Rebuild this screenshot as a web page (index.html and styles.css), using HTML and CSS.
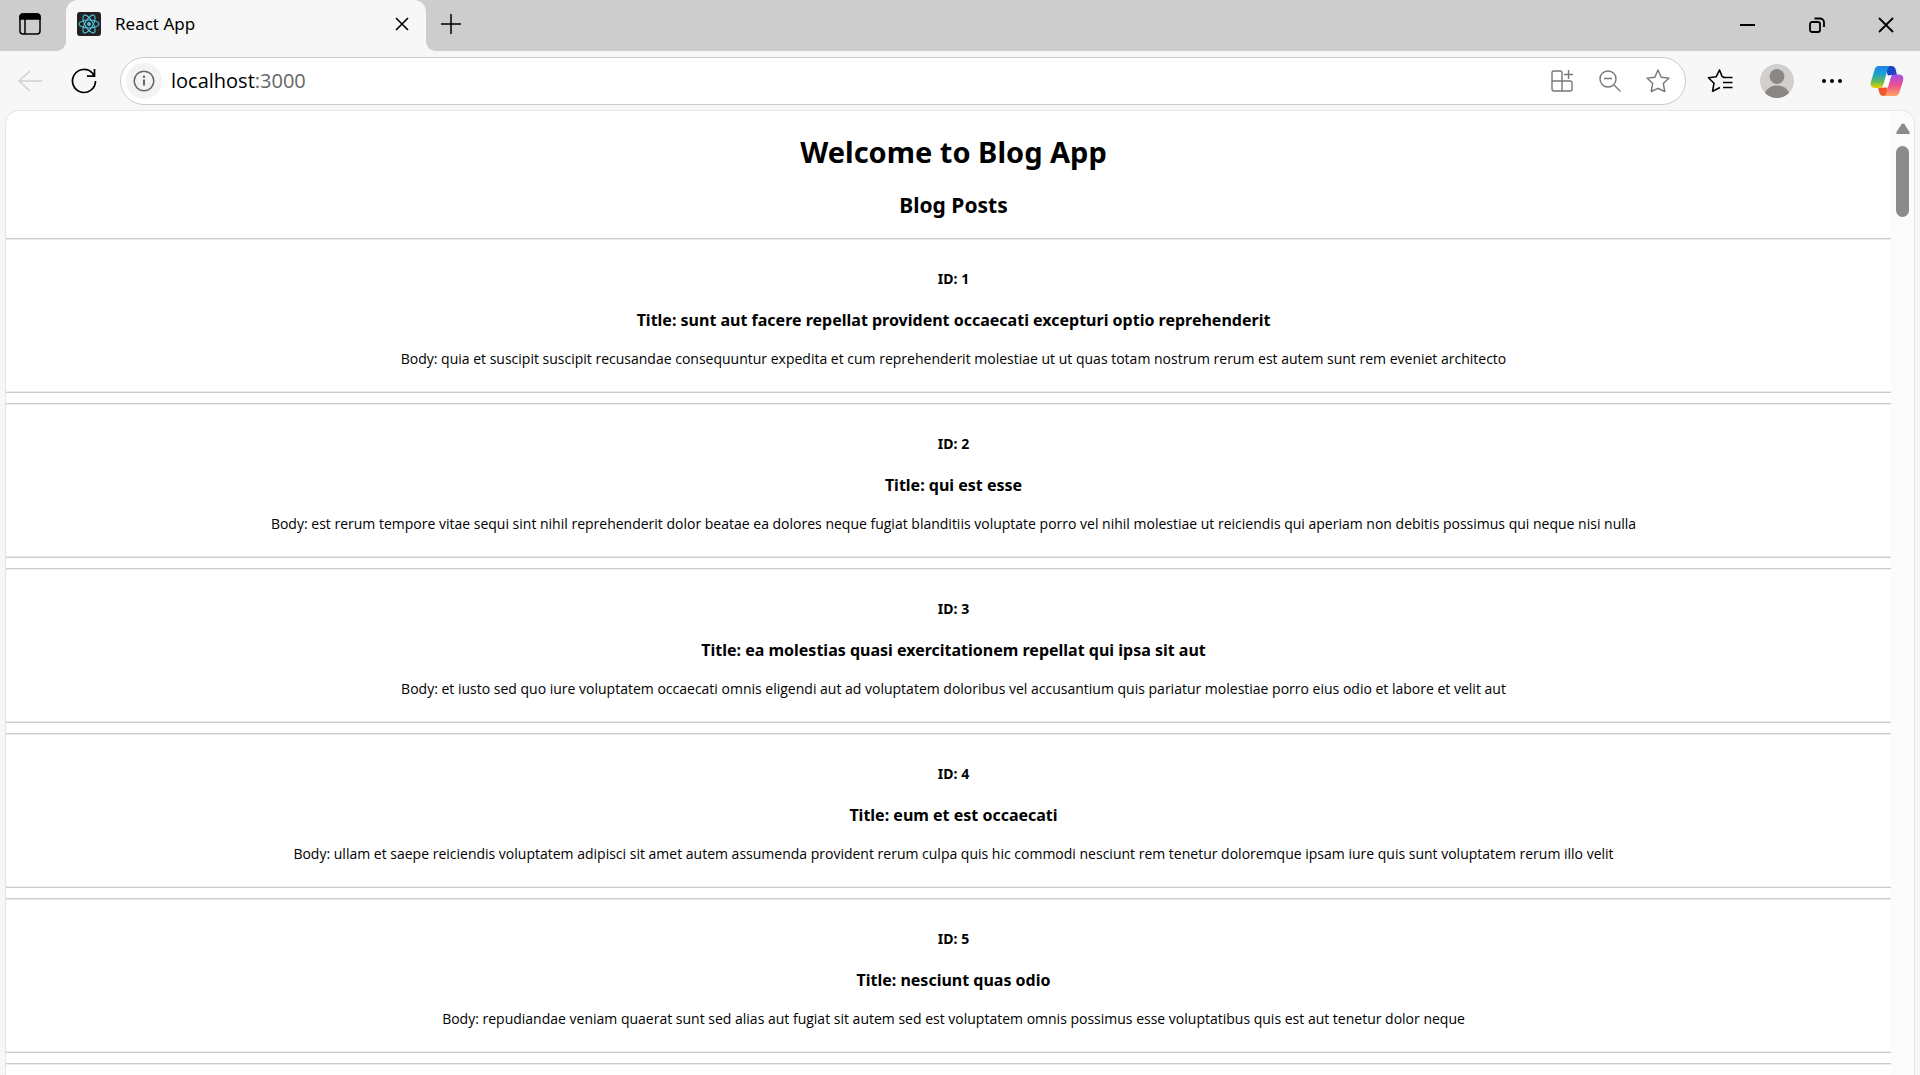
FILE: index.html
```html
<!DOCTYPE html>
<html lang="en">
<head>
<meta charset="utf-8">
<title>React App</title>
<link rel="stylesheet" href="styles.css">
</head>
<body>
<header class="tabstrip">
  <button class="icon-btn tab-actions" aria-label="Tab actions">
    <svg width="22" height="22" viewBox="0 0 22 22" fill="none" stroke="#000" stroke-width="1.5"><rect x="1" y="1" width="20" height="20" rx="3"/><path d="M1 4a3 3 0 0 1 3-3h14a3 3 0 0 1 3 3v2H1z" fill="#000"/><path d="M6 6v15"/></svg>
  </button>
  <div class="tab">
    <svg class="favicon" width="24" height="24" viewBox="0 0 24 24" fill="none" stroke="#53c1de" stroke-width="1.1"><rect width="24" height="24" rx="3" fill="#222" stroke="none"/><ellipse cx="12" cy="12" rx="10" ry="4"/><ellipse cx="12" cy="12" rx="10" ry="4" transform="rotate(60 12 12)"/><ellipse cx="12" cy="12" rx="10" ry="4" transform="rotate(120 12 12)"/><circle cx="12" cy="12" r="2" fill="#53c1de" stroke="none"/></svg>
    <span class="tab-title">React App</span>
    <button class="icon-btn" aria-label="Close tab">
      <svg width="14" height="14" viewBox="0 0 14 14" stroke="#000" stroke-width="1.6"><path d="M1 1l12 12M13 1L1 13"/></svg>
    </button>
  </div>
  <button class="icon-btn new-tab" aria-label="New tab">
    <svg width="22" height="22" viewBox="0 0 22 22" stroke="#000" stroke-width="1.5"><path d="M11 1v20M1 11h20"/></svg>
  </button>
  <div class="window-controls">
    <button class="icon-btn" aria-label="Minimize"><svg width="16" height="16" viewBox="0 0 16 16" stroke="#000" stroke-width="2"><path d="M0 8h15"/></svg></button>
    <button class="icon-btn" aria-label="Restore"><svg width="16" height="16" viewBox="0 0 16 16" fill="none" stroke="#000" stroke-width="1.8"><rect x="1" y="5" width="10" height="10" rx="2"/><path d="M5.500 1.500h5.500a4 4 0 0 1 4 4v4.500"/></svg></button>
    <button class="icon-btn" aria-label="Close"><svg width="16" height="16" viewBox="0 0 16 16" stroke="#000" stroke-width="1.8"><path d="M1 1l14 14M15 1L1 15"/></svg></button>
  </div>
</header>
<nav class="toolbar">
  <button class="icon-btn" aria-label="Back" disabled>
    <svg width="24" height="22" viewBox="0 0 24 22" fill="none" stroke="#cfcfcf" stroke-width="1.5"><path d="M24 11H1M12 1L1 11l11 10"/></svg>
  </button>
  <button class="icon-btn" aria-label="Refresh">
    <svg width="26" height="26" viewBox="0 0 26 26" fill="none" stroke="#000" stroke-width="1.7"><path d="M24.500 13A11.500 11.500 0 1 1 21.500 5.200L23.500 8M16 8.200h7.500V1"/></svg>
  </button>
  <div class="address">
    <button class="icon-btn site-info" aria-label="Site information">
      <svg width="22" height="22" viewBox="0 0 22 22" fill="none" stroke="#666" stroke-width="1.5"><circle cx="11" cy="11" r="9.800"/><path d="M11 9.500v6" stroke-width="2"/><circle cx="11" cy="6.700" r="1.200" fill="#666" stroke="none"/></svg>
    </button>
    <div class="url" role="textbox" aria-label="Address">localhost<span class="port">:3000</span></div>
    <button class="icon-btn" aria-label="Add app"><svg width="24" height="24" viewBox="0 0 24 24" fill="none" stroke="#777" stroke-width="1.400"><path d="M12 12V4a2 2 0 0 0-2-2H4a2 2 0 0 0-2 2v16a2 2 0 0 0 2 2h16a2 2 0 0 0 2-2v-6a2 2 0 0 0-2-2H2M12 12v10M18.500 1v9M14 5.500h9"/></svg></button>
    <button class="icon-btn" aria-label="Zoom out"><svg width="24" height="24" viewBox="0 0 24 24" fill="none" stroke="#777" stroke-width="1.400"><circle cx="10" cy="10" r="8"/><path d="M6 9.500h8M16 16l6.500 6.500"/></svg></button>
    <button class="icon-btn" aria-label="Add to favorites"><svg width="24" height="24" viewBox="0 0 24 24" fill="none" stroke="#777" stroke-width="1.400" stroke-linejoin="round"><path d="M12 1l3.200 7.200 7.800.9-5.700 5.400 1.500 8L12 19.300 5.200 22.500l1.500-8L1 9.100l7.800-.9z"/></svg></button>
  </div>
  <div class="actions">
    <button class="icon-btn" aria-label="Favorites"><svg width="26" height="24" viewBox="0 0 26 24" fill="none" stroke="#000" stroke-width="1.600" stroke-linejoin="round"><path d="M17 8l-1.800-.3L12.500 1 9.300 7.700l-7.800 1 5.500 5.500-1.400 8L13 18.500M16 8.500h9.500M16 13.500h9.500M16 18.500h9.500"/></svg></button>
    <button class="icon-btn" aria-label="Profile"><svg width="34" height="34" viewBox="0 0 34 34"><circle cx="17" cy="17" r="17" fill="#d2d0ce"/><circle cx="17" cy="12.500" r="7.400" fill="#8a8684"/><path d="M5 29c2-5 6.500-7.500 12-7.500s10 2.500 12 7.500a17 17 0 0 1-24 0z" fill="#8a8684"/></svg></button>
    <button class="icon-btn" aria-label="Settings and more"><svg width="22" height="6" viewBox="0 0 22 6"><circle cx="3" cy="3" r="2"/><circle cx="11" cy="3" r="2"/><circle cx="19" cy="3" r="2"/></svg></button>
    <button class="icon-btn" aria-label="Copilot">
      <svg width="34" height="32" viewBox="0 0 34 32">
        <defs>
          <linearGradient id="cool" x1="0" y1="0" x2="0" y2="1"><stop offset="0" stop-color="#1a86e6"/><stop offset=".35" stop-color="#1c9fd6"/><stop offset=".7" stop-color="#5fbb55"/><stop offset="1" stop-color="#f2d000"/></linearGradient>
          <linearGradient id="warm" x1="0" y1="0" x2="0" y2="1"><stop offset="0" stop-color="#a04fe8"/><stop offset=".5" stop-color="#ee5090"/><stop offset="1" stop-color="#ffa45c"/></linearGradient>
        </defs>
        <path d="M15 1h6.500c2.500 0 3.500 1.200 4.200 3.500L27 10h-5l-4 1z" fill="#1b46c4"/>
        <path d="M19 31h-5.500c-2.500 0-3.500-1.200-4.200-3.500L8 22.500h5l4-1z" fill="#f0562c"/>
        <path d="M9 1h12c-2 0-2.800 1.500-3.400 3.500L13.500 19c-.7 2.500-1.700 4-4 4H5c-4 0-5-3-4-6.500L4.500 5C5.300 2.500 6.500 1 9 1z" fill="url(#cool)"/>
        <path d="M25 31H13c2 0 2.800-1.500 3.400-3.500L20.500 13c.7-2.500 1.700-3.500 4-3.500H29c4 0 5 3 4 6.500L29.500 27c-.8 2.500-2 4-4.500 4z" fill="url(#warm)"/>
        <path d="M18.500 10.500h3.200c-.7.700-1.100 1.700-1.400 2.900L18 21.500c-.2.700-.8 1-1.500 1h-4.200c.7-.7 1.100-1.700 1.500-3l2.200-7.300c.3-1.200 1.200-1.700 2.500-1.700z" fill="#fff"/>
      </svg>
    </button>
  </div>
</nav>
<div class="viewport">
  <main class="page">
    <h1>Welcome to Blog App</h1>
    <h2>Blog Posts</h2>
    <div class="posts">
      <article class="post"><h4>ID: 1</h4><h3>Title: sunt aut facere repellat provident occaecati excepturi optio reprehenderit</h3><p>Body: quia et suscipit suscipit recusandae consequuntur expedita et cum reprehenderit molestiae ut ut quas totam nostrum rerum est autem sunt rem eveniet architecto</p></article>
      <article class="post"><h4>ID: 2</h4><h3>Title: qui est esse</h3><p>Body: est rerum tempore vitae sequi sint nihil reprehenderit dolor beatae ea dolores neque fugiat blanditiis voluptate porro vel nihil molestiae ut reiciendis qui aperiam non debitis possimus qui neque nisi nulla</p></article>
      <article class="post"><h4>ID: 3</h4><h3>Title: ea molestias quasi exercitationem repellat qui ipsa sit aut</h3><p>Body: et iusto sed quo iure voluptatem occaecati omnis eligendi aut ad voluptatem doloribus vel accusantium quis pariatur molestiae porro eius odio et labore et velit aut</p></article>
      <article class="post"><h4>ID: 4</h4><h3>Title: eum et est occaecati</h3><p>Body: ullam et saepe reiciendis voluptatem adipisci sit amet autem assumenda provident rerum culpa quis hic commodi nesciunt rem tenetur doloremque ipsam iure quis sunt voluptatem rerum illo velit</p></article>
      <article class="post"><h4>ID: 5</h4><h3>Title: nesciunt quas odio</h3><p>Body: repudiandae veniam quaerat sunt sed alias aut fugiat sit autem sed est voluptatem omnis possimus esse voluptatibus quis est aut tenetur dolor neque</p></article>
      <article class="post"></article>
    </div>
  </main>
  <div class="scrollbar" aria-hidden="true">
    <svg width="14" height="12" viewBox="0 0 14 12"><path d="M5.500 1.200a1.800 1.800 0 0 1 3 0l5 7.800c.7 1.200 0 2-1.200 2H1.700C.5 11-.2 10.200.5 9z" fill="#8b8b8b"/></svg>
    <div class="thumb"></div>
  </div>
</div>
</body>
</html>
```
FILE: styles.css
```css
* { box-sizing: border-box; }
body {
  margin: 0;
  height: 100vh;
  display: flex;
  flex-direction: column;
  overflow: hidden;
  background: #f7f7f7;
  color: #000;
  font-family: "Noto Sans", "Open Sans", sans-serif;
}
.icon-btn {
  display: flex;
  align-items: center;
  justify-content: center;
  flex: none;
  padding: 0;
  border: 0;
  background: none;
}
.tabstrip {
  display: flex;
  align-items: stretch;
  flex: none;
  height: 51px;
  background: #cdcdcd;
}
.tab-actions { width: 60px; padding-bottom: 3px; }
.tab {
  position: relative;
  display: flex;
  align-items: center;
  gap: 14px;
  width: 360px;
  margin-left: 6px;
  padding: 0 17px 3px 11px;
  border-radius: 12px 12px 0 0;
  background: #f7f7f7;
}
.tab::before,
.tab::after {
  content: "";
  position: absolute;
  bottom: 0;
  width: 10px;
  height: 10px;
}
.tab::before { left: -10px; background: radial-gradient(circle at 0 0, #cdcdcd 10px, #f7f7f7 10px); }
.tab::after { right: -10px; background: radial-gradient(circle at 100% 0, #cdcdcd 10px, #f7f7f7 10px); }
.tab-title { flex: 1; padding-bottom: 2px; font-size: 17px; }
.new-tab { width: 50px; padding-bottom: 4px; }
.window-controls { display: flex; margin-left: auto; }
.window-controls .icon-btn { width: 69px; padding-bottom: 1px; }
.toolbar {
  display: flex;
  align-items: center;
  gap: 29px;
  flex: none;
  height: 59px;
  padding: 0 16px 0 18px;
}
.address {
  display: flex;
  align-items: center;
  flex: 1;
  gap: 24px;
  height: 48px;
  margin-left: -6px;
  padding: 0 15px 0 5px;
  border: 1px solid #cbcbcb;
  border-radius: 24px;
  background: #fff;
}
.site-info { width: 36px; height: 36px; border-radius: 50%; background: #f3f3f3; }
.url { flex: 1; margin-left: -15px; font-family: "Open Sans", "Noto Sans", sans-serif; font-size: 20px; }
.port { color: #666; }
.actions { display: flex; align-items: center; gap: 27px; margin-left: -8px; }
.viewport {
  display: flex;
  flex: 1;
  min-height: 0;
  margin: 0 5px;
  border: 1px solid #e6e6e6;
  border-bottom: 0;
  border-radius: 14px 14px 0 0;
  background: #fff;
  overflow: hidden;
}
.page { flex: 1; min-width: 0; text-align: center; }
h1, h2, h3, h4, p { margin: 0; padding-left: 10px; }
h1 { margin-top: 21px; font-size: 29px; line-height: 40px; }
h2 { margin-top: 18px; font-size: 21px; line-height: 30px; }
.posts { display: flex; flex-direction: column; gap: 10px; margin-top: 18px; }
.post {
  flex: none;
  height: 155px;
  padding-top: 30px;
  border: solid #ccc;
  border-width: 1px 0;
  box-shadow: inset 0 1px #ececec, inset 0 -1px #ececec;
}
h4 { font-size: 14px; line-height: 20px; }
h3 { margin-top: 19px; font-size: 16px; line-height: 24px; }
p { margin-top: 17px; font-family: "Open Sans", "Noto Sans", sans-serif; font-size: 14px; line-height: 20px; }
.scrollbar {
  display: flex;
  flex-direction: column;
  align-items: center;
  gap: 11px;
  width: 23px;
  padding-top: 12px;
  background: #fbfbfb;
}
.thumb { width: 13px; height: 71px; border-radius: 7px; background: #8b8b8b; }
```
